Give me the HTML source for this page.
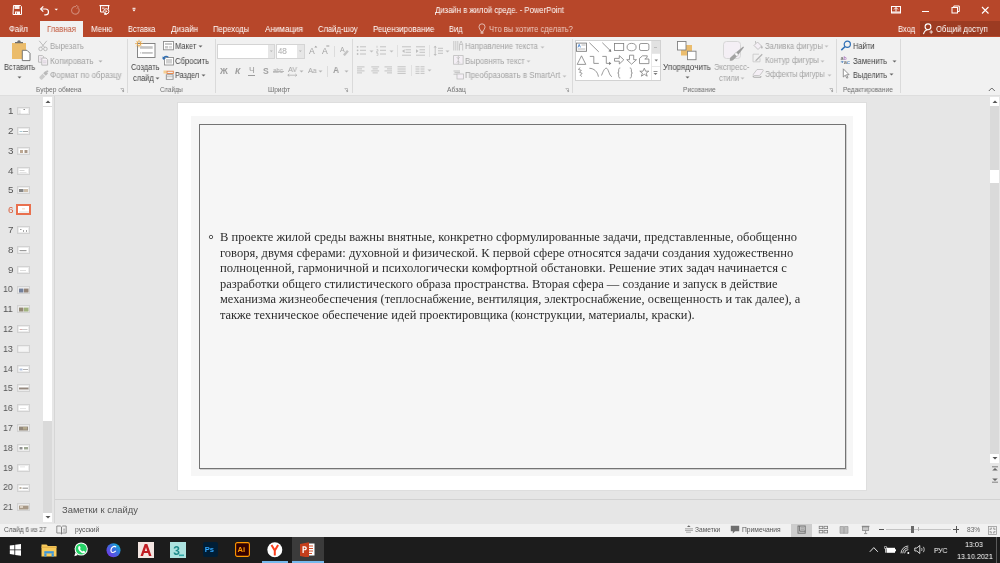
<!DOCTYPE html>
<html><head><meta charset="utf-8">
<style>
*{margin:0;padding:0;box-sizing:border-box}
html,body{width:1000px;height:563px;overflow:hidden;background:#e6e6e6;font-family:"Liberation Sans",sans-serif;position:relative}
.t{position:absolute;white-space:nowrap;will-change:transform}
.r{position:absolute}
</style></head><body>
<div class="r" style="left:0px;top:0px;width:1000px;height:37px;background:#b7472a;"></div>
<div class="t" style="left:434.70px;top:4.47px;font-family:'Liberation Sans',sans-serif;font-size:8.400px;line-height:1.6;color:#fff;transform:scaleX(0.9231);transform-origin:0 0;">Дизайн в жилой среде. - PowerPoint</div>
<svg class="r" style="left:12px;top:5px;" width="11" height="10" viewBox="0 0 11 10"><path d="M1.5 0.5h7l1 1v8h-8.5z" fill="none" stroke="#fff" stroke-width="1"/><rect x="2.5" y="1" width="5" height="3" fill="#fff" opacity="0.9"/><rect x="3" y="6.5" width="5" height="3" fill="#fff"/><rect x="4" y="7.5" width="1" height="1.2" fill="#b7472a"/></svg>
<svg class="r" style="left:39px;top:5px;" width="12" height="11" viewBox="0 0 12 11"><path d="M2 4h4.6a2.9 2.9 0 0 1 0 5.8h-1.3" fill="none" stroke="#fff" stroke-width="1.2"/><path d="M4.3 1.4l-2.7 2.6 2.7 2.6" fill="none" stroke="#fff" stroke-width="1.2"/></svg>
<svg class="r" style="left:54px;top:8px;" width="5" height="3" viewBox="0 0 5 3"><path d="M0.5 0.8h3.5l-1.75 1.8z" fill="#fff"/></svg>
<svg class="r" style="left:70px;top:5px;" width="11" height="10" viewBox="0 0 11 10"><path d="M8.5 3.2a3.8 3.8 0 1 1-2.5-1.6" fill="none" stroke="#fff" stroke-opacity="0.35" stroke-width="1.1"/><path d="M6 0.2l2.5 1.6-1.8 2" fill="none" stroke="#fff" stroke-opacity="0.35" stroke-width="1"/></svg>
<svg class="r" style="left:99px;top:4px;" width="12" height="12" viewBox="0 0 12 12"><rect x="0.5" y="1" width="10" height="1.2" fill="#fff"/><path d="M1.5 2v6h3M9.5 2v3" fill="none" stroke="#fff" stroke-width="1"/><circle cx="7.3" cy="7.3" r="2.6" fill="none" stroke="#fff" stroke-width="1"/><path d="M6.5 6v2.6l2-1.3z" fill="#fff"/><path d="M5 10.2h3M6.5 8.5v2" stroke="#fff" stroke-width="1"/><rect x="3" y="3.5" width="2.5" height="1.3" fill="#fff" opacity="0.7"/></svg>
<svg class="r" style="left:132px;top:7px;" width="5" height="5" viewBox="0 0 5 5"><rect x="0.5" y="0.8" width="3" height="1" fill="#fff"/><path d="M0.3 2.6h3.4l-1.7 1.9z" fill="#fff"/></svg>
<svg class="r" style="left:890px;top:6px;" width="11" height="8" viewBox="0 0 11 8"><rect x="1.5" y="0.5" width="9" height="6.5" fill="none" stroke="#fff" stroke-width="1"/><path d="M6 1.5v4M4 3.5l2-2 2 2" fill="none" stroke="#fff" stroke-width="1"/><rect x="1.5" y="5.5" width="9" height="1.2" fill="#fff"/></svg>
<div class="r" style="left:922px;top:11px;width:7px;height:1px;background:#fff;"></div>
<svg class="r" style="left:951px;top:5px;" width="9" height="9" viewBox="0 0 9 9"><rect x="1" y="2.5" width="5.5" height="5.5" fill="none" stroke="#fff" stroke-width="1"/><path d="M2.8 2.5v-1.5h5.5v5.5h-1.8" fill="none" stroke="#fff" stroke-width="1"/></svg>
<svg class="r" style="left:981px;top:6px;" width="8" height="8" viewBox="0 0 8 8"><path d="M1 1l6.5 6.5M7.5 1l-6.5 6.5" stroke="#fff" stroke-width="1.1"/></svg>
<div class="r" style="left:40px;top:21px;width:43px;height:16px;background:#f1f1f1;"></div>
<div class="t" style="left:9.30px;top:22.55px;font-family:'Liberation Sans',sans-serif;font-size:8.500px;line-height:1.6;color:#fff;transform:scaleX(0.8952);transform-origin:0 0;">Файл</div>
<div class="t" style="left:46.80px;top:22.55px;font-family:'Liberation Sans',sans-serif;font-size:8.500px;line-height:1.6;color:#c25437;transform:scaleX(0.8930);transform-origin:0 0;">Главная</div>
<div class="t" style="left:91.00px;top:22.55px;font-family:'Liberation Sans',sans-serif;font-size:8.500px;line-height:1.6;color:#fff;transform:scaleX(0.9316);transform-origin:0 0;">Меню</div>
<div class="t" style="left:128.10px;top:22.55px;font-family:'Liberation Sans',sans-serif;font-size:8.500px;line-height:1.6;color:#fff;transform:scaleX(0.8640);transform-origin:0 0;">Вставка</div>
<div class="t" style="left:170.70px;top:22.55px;font-family:'Liberation Sans',sans-serif;font-size:8.500px;line-height:1.6;color:#fff;transform:scaleX(0.9447);transform-origin:0 0;">Дизайн</div>
<div class="t" style="left:213.20px;top:22.55px;font-family:'Liberation Sans',sans-serif;font-size:8.500px;line-height:1.6;color:#fff;transform:scaleX(0.9106);transform-origin:0 0;">Переходы</div>
<div class="t" style="left:265.00px;top:22.55px;font-family:'Liberation Sans',sans-serif;font-size:8.500px;line-height:1.6;color:#fff;transform:scaleX(0.9522);transform-origin:0 0;">Анимация</div>
<div class="t" style="left:318.00px;top:22.55px;font-family:'Liberation Sans',sans-serif;font-size:8.500px;line-height:1.6;color:#fff;transform:scaleX(0.8985);transform-origin:0 0;">Слайд-шоу</div>
<div class="t" style="left:372.80px;top:22.55px;font-family:'Liberation Sans',sans-serif;font-size:8.500px;line-height:1.6;color:#fff;transform:scaleX(0.9323);transform-origin:0 0;">Рецензирование</div>
<div class="t" style="left:449.30px;top:22.55px;font-family:'Liberation Sans',sans-serif;font-size:8.500px;line-height:1.6;color:#fff;transform:scaleX(0.8775);transform-origin:0 0;">Вид</div>
<div class="t" style="left:489.00px;top:22.55px;font-family:'Liberation Sans',sans-serif;font-size:8.500px;line-height:1.6;color:#eccbc1;transform:scaleX(0.8918);transform-origin:0 0;">Что вы хотите сделать?</div>
<div class="t" style="left:897.50px;top:22.55px;font-family:'Liberation Sans',sans-serif;font-size:8.500px;line-height:1.6;color:#fff;transform:scaleX(0.8892);transform-origin:0 0;">Вход</div>
<div class="r" style="left:920px;top:21px;width:80px;height:15px;background:#9c3b22;"></div>
<svg class="r" style="left:922px;top:22px;" width="12" height="13" viewBox="0 0 12 13"><circle cx="6" cy="4.8" r="2.9" fill="none" stroke="#fff" stroke-width="1.1"/><path d="M1.5 12.2c0.6-2.6 2.2-4.2 4-4.5" fill="none" stroke="#fff" stroke-width="1.1"/><path d="M7.5 10h3.5M9.2 8.2v3.6" stroke="#fff" stroke-opacity="0.75" stroke-width="1"/></svg>
<svg class="r" style="left:478px;top:23px;" width="8" height="12" viewBox="0 0 8 12"><path d="M4 0.8a3 3 0 0 1 3 3c0 1.6-1.3 2.8-1.8 4.5h-2.4c-0.5-1.7-1.8-2.9-1.8-4.5a3 3 0 0 1 3-3z" fill="none" stroke="#fff" stroke-opacity="0.6" stroke-width="1"/><rect x="2.6" y="8.8" width="2.8" height="2" fill="#fff" fill-opacity="0.6"/></svg>
<div class="t" style="left:935.60px;top:22.55px;font-family:'Liberation Sans',sans-serif;font-size:8.500px;line-height:1.6;color:#fff;transform:scaleX(0.9034);transform-origin:0 0;">Общий доступ</div>
<div class="r" style="left:0px;top:37px;width:1000px;height:58px;background:#f1f1f1;"></div>
<div class="r" style="left:0px;top:95px;width:1000px;height:1px;background:#dedede;"></div>
<div class="t" style="left:3.60px;top:61.48px;font-family:'Liberation Sans',sans-serif;font-size:8.300px;line-height:1.6;color:#444;transform:scaleX(0.8894);transform-origin:0 0;">Вставить</div>
<div class="t" style="left:50.00px;top:39.98px;font-family:'Liberation Sans',sans-serif;font-size:8.300px;line-height:1.6;color:#a3a3a3;transform:scaleX(0.9183);transform-origin:0 0;">Вырезать</div>
<div class="t" style="left:50.00px;top:54.68px;font-family:'Liberation Sans',sans-serif;font-size:8.300px;line-height:1.6;color:#a3a3a3;transform:scaleX(0.9755);transform-origin:0 0;">Копировать</div>
<div class="t" style="left:50.00px;top:68.98px;font-family:'Liberation Sans',sans-serif;font-size:8.300px;line-height:1.6;color:#a3a3a3;transform:scaleX(0.9620);transform-origin:0 0;">Формат по образцу</div>
<div class="t" style="left:35.80px;top:84.52px;font-family:'Liberation Sans',sans-serif;font-size:6.700px;line-height:1.6;color:#707070;">Буфер обмена</div>
<div class="t" style="left:131.20px;top:61.48px;font-family:'Liberation Sans',sans-serif;font-size:8.300px;line-height:1.6;color:#444;transform:scaleX(0.9004);transform-origin:0 0;">Создать</div>
<div class="t" style="left:133.00px;top:71.78px;font-family:'Liberation Sans',sans-serif;font-size:8.300px;line-height:1.6;color:#444;transform:scaleX(0.9006);transform-origin:0 0;">слайд</div>
<div class="t" style="left:175.00px;top:39.98px;font-family:'Liberation Sans',sans-serif;font-size:8.300px;line-height:1.6;color:#444;transform:scaleX(0.9111);transform-origin:0 0;">Макет</div>
<div class="t" style="left:175.00px;top:54.68px;font-family:'Liberation Sans',sans-serif;font-size:8.300px;line-height:1.6;color:#444;transform:scaleX(0.9270);transform-origin:0 0;">Сбросить</div>
<div class="t" style="left:175.00px;top:68.98px;font-family:'Liberation Sans',sans-serif;font-size:8.300px;line-height:1.6;color:#444;transform:scaleX(0.8786);transform-origin:0 0;">Раздел</div>
<div class="t" style="left:160.20px;top:84.52px;font-family:'Liberation Sans',sans-serif;font-size:6.700px;line-height:1.6;color:#707070;transform:scaleX(0.9182);transform-origin:0 0;">Слайды</div>
<div class="t" style="left:267.90px;top:84.52px;font-family:'Liberation Sans',sans-serif;font-size:6.700px;line-height:1.6;color:#707070;">Шрифт</div>
<div class="t" style="left:465.30px;top:39.98px;font-family:'Liberation Sans',sans-serif;font-size:8.300px;line-height:1.6;color:#a3a3a3;transform:scaleX(0.9265);transform-origin:0 0;">Направление текста</div>
<div class="t" style="left:465.30px;top:54.68px;font-family:'Liberation Sans',sans-serif;font-size:8.300px;line-height:1.6;color:#a3a3a3;transform:scaleX(0.9264);transform-origin:0 0;">Выровнять текст</div>
<div class="t" style="left:465.30px;top:68.98px;font-family:'Liberation Sans',sans-serif;font-size:8.300px;line-height:1.6;color:#a3a3a3;transform:scaleX(0.9456);transform-origin:0 0;">Преобразовать в SmartArt</div>
<div class="t" style="left:447.00px;top:84.52px;font-family:'Liberation Sans',sans-serif;font-size:6.700px;line-height:1.6;color:#707070;">Абзац</div>
<div class="t" style="left:663.00px;top:61.48px;font-family:'Liberation Sans',sans-serif;font-size:8.300px;line-height:1.6;color:#444;transform:scaleX(0.9679);transform-origin:0 0;">Упорядочить</div>
<div class="t" style="left:713.70px;top:61.48px;font-family:'Liberation Sans',sans-serif;font-size:8.300px;line-height:1.6;color:#a3a3a3;transform:scaleX(0.9188);transform-origin:0 0;">Экспресс-</div>
<div class="t" style="left:718.80px;top:71.78px;font-family:'Liberation Sans',sans-serif;font-size:8.300px;line-height:1.6;color:#a3a3a3;transform:scaleX(0.9067);transform-origin:0 0;">стили</div>
<div class="t" style="left:682.90px;top:84.52px;font-family:'Liberation Sans',sans-serif;font-size:6.700px;line-height:1.6;color:#707070;transform:scaleX(0.9689);transform-origin:0 0;">Рисование</div>
<div class="t" style="left:764.90px;top:39.78px;font-family:'Liberation Sans',sans-serif;font-size:8.300px;line-height:1.6;color:#a3a3a3;transform:scaleX(0.9134);transform-origin:0 0;">Заливка фигуры</div>
<div class="t" style="left:764.90px;top:54.08px;font-family:'Liberation Sans',sans-serif;font-size:8.300px;line-height:1.6;color:#a3a3a3;transform:scaleX(0.9287);transform-origin:0 0;">Контур фигуры</div>
<div class="t" style="left:764.90px;top:68.08px;font-family:'Liberation Sans',sans-serif;font-size:8.300px;line-height:1.6;color:#a3a3a3;transform:scaleX(0.8603);transform-origin:0 0;">Эффекты фигуры</div>
<div class="t" style="left:853.00px;top:39.98px;font-family:'Liberation Sans',sans-serif;font-size:8.300px;line-height:1.6;color:#444;transform:scaleX(0.9123);transform-origin:0 0;">Найти</div>
<div class="t" style="left:853.00px;top:54.68px;font-family:'Liberation Sans',sans-serif;font-size:8.300px;line-height:1.6;color:#444;transform:scaleX(0.9113);transform-origin:0 0;">Заменить</div>
<div class="t" style="left:853.00px;top:68.98px;font-family:'Liberation Sans',sans-serif;font-size:8.300px;line-height:1.6;color:#444;transform:scaleX(0.8881);transform-origin:0 0;">Выделить</div>
<div class="t" style="left:843.30px;top:84.52px;font-family:'Liberation Sans',sans-serif;font-size:6.700px;line-height:1.6;color:#707070;transform:scaleX(0.9797);transform-origin:0 0;">Редактирование</div>
<div class="r" style="left:127px;top:39px;width:1px;height:54px;background:#dadada;"></div>
<div class="r" style="left:215px;top:39px;width:1px;height:54px;background:#dadada;"></div>
<div class="r" style="left:352px;top:39px;width:1px;height:54px;background:#dadada;"></div>
<div class="r" style="left:572px;top:39px;width:1px;height:54px;background:#dadada;"></div>
<div class="r" style="left:836px;top:39px;width:1px;height:54px;background:#dadada;"></div>
<div class="r" style="left:900px;top:39px;width:1px;height:54px;background:#dadada;"></div>
<svg class="r" style="left:11px;top:40px;" width="21" height="22" viewBox="0 0 21 22"><rect x="1" y="3" width="14" height="16" fill="#ebbc6b"/><path d="M4 3.2h8v-1.2h-2.2a1.8 1.8 0 0 0-3.6 0h-2.2z" fill="#6e6e6e"/><path d="M11.3 10.3h4.7l3 3v7.3h-7.7z" fill="#fff" stroke="#6a6a6a" stroke-width="0.9"/></svg>
<svg class="r" style="left:17px;top:76px;" width="5" height="3" viewBox="0 0 5 3"><path d="M0.5 0.5h4l-2 2z" fill="#666"/></svg>
<svg class="r" style="left:38px;top:40px;" width="10" height="12" viewBox="0 0 10 12"><path d="M1.2 0.8l5.6 6.8M8.8 0.8l-5.6 6.8" stroke="#b5b5b5" stroke-width="0.9" fill="none"/><circle cx="2.6" cy="8.9" r="1.8" fill="none" stroke="#b5b5b5" stroke-width="0.9"/><circle cx="7.4" cy="8.9" r="1.8" fill="none" stroke="#b5b5b5" stroke-width="0.9"/></svg>
<svg class="r" style="left:38px;top:55px;" width="11" height="11" viewBox="0 0 11 11"><path d="M0.5 0.6h4l1.2 1.2v5.4h-5.2z" fill="#f6f2f6" stroke="#b5b5b5" stroke-width="0.9"/><path d="M3.8 3h4.2l1.6 1.6v5.5h-5.8z" fill="#f6f2f6" stroke="#b5b5b5" stroke-width="0.9"/><path d="M1.5 3h2M1.5 4.8h2M5 6h3.5M5 7.8h3.5" stroke="#cdbfd0" stroke-width="0.7"/></svg>
<svg class="r" style="left:98px;top:60px;" width="5" height="3" viewBox="0 0 5 3"><path d="M0.5 0.5h4l-2 2z" fill="#b0b0b0"/></svg>
<svg class="r" style="left:39px;top:70px;" width="10" height="10" viewBox="0 0 10 10"><path d="M0.6 6.8l3-3 2.6 2.6-3 3c-0.5 0.4-1 0.4-1.4 0l-1.2-1.2c-0.4-0.4-0.4-0.9 0-1.4z" fill="#cbcbcb"/><path d="M4.2 3.2l2.2-2.2 2.6 2.6-2.2 2.2z" fill="#b9b9b9"/><path d="M8.2 0.3v2.2M7.1 1.4h2.2" stroke="#b0b0b0" stroke-width="0.8"/></svg>
<svg class="r" style="left:120px;top:88px;" width="5" height="5" viewBox="0 0 5 5"><path d="M0.5 0.5h3v3" fill="none" stroke="#9a9a9a" stroke-width="0.6"/><path d="M1.5 1.5l2 2M2.3 3.6h1.3v-1.3" fill="none" stroke="#8a8a8a" stroke-width="0.6"/></svg>
<svg class="r" style="left:344px;top:88px;" width="5" height="5" viewBox="0 0 5 5"><path d="M0.5 0.5h3v3" fill="none" stroke="#9a9a9a" stroke-width="0.6"/><path d="M1.5 1.5l2 2M2.3 3.6h1.3v-1.3" fill="none" stroke="#8a8a8a" stroke-width="0.6"/></svg>
<svg class="r" style="left:565px;top:88px;" width="5" height="5" viewBox="0 0 5 5"><path d="M0.5 0.5h3v3" fill="none" stroke="#9a9a9a" stroke-width="0.6"/><path d="M1.5 1.5l2 2M2.3 3.6h1.3v-1.3" fill="none" stroke="#8a8a8a" stroke-width="0.6"/></svg>
<svg class="r" style="left:829px;top:88px;" width="5" height="5" viewBox="0 0 5 5"><path d="M0.5 0.5h3v3" fill="none" stroke="#9a9a9a" stroke-width="0.6"/><path d="M1.5 1.5l2 2M2.3 3.6h1.3v-1.3" fill="none" stroke="#8a8a8a" stroke-width="0.6"/></svg>
<svg class="r" style="left:134px;top:39px;" width="23" height="20" viewBox="0 0 23 20"><rect x="3.5" y="4.5" width="17.5" height="14" fill="#fff" stroke="#7a7a7a" stroke-width="0.9"/><rect x="6" y="7.2" width="12.7" height="2.6" fill="#c4c4c4"/><rect x="7.8" y="13" width="10.9" height="1.8" fill="#c4c4c4"/><rect x="6" y="13.3" width="1" height="1.2" fill="#c4c4c4"/><circle cx="5" cy="4.6" r="1.9" fill="none" stroke="#eaa94a" stroke-width="1.1"/><path d="M5 0.8v1.4M5 7v1.4M1.2 4.6h1.4M7.4 4.6h1.4M2.3 1.9l1 1M6.7 6.3l1 1M2.3 7.3l1-1M6.7 2.9l1-1" stroke="#eaa94a" stroke-width="0.9"/></svg>
<svg class="r" style="left:155px;top:77px;" width="5" height="3" viewBox="0 0 5 3"><path d="M0.5 0.5h4l-2 2z" fill="#666"/></svg>
<svg class="r" style="left:163px;top:41px;" width="11" height="10" viewBox="0 0 11 10"><rect x="0.5" y="0.5" width="10" height="8.3" fill="#fff" stroke="#8c8c8c" stroke-width="0.9"/><rect x="2" y="2" width="7" height="2" fill="#c8c8c8"/><rect x="2" y="5" width="3" height="2.5" fill="#c8c8c8"/><rect x="5.8" y="5" width="3.2" height="2.5" fill="#d8d8d8"/></svg>
<svg class="r" style="left:198px;top:45px;" width="5" height="3" viewBox="0 0 5 3"><path d="M0.5 0.5h4l-2 2z" fill="#666"/></svg>
<svg class="r" style="left:162px;top:55px;" width="12" height="11" viewBox="0 0 12 11"><rect x="2.5" y="2.5" width="9" height="7.5" fill="#fff" stroke="#8c8c8c" stroke-width="0.9"/><rect x="4" y="4" width="6" height="4.5" fill="#d0d0d0"/><path d="M1 4.2c0.5-2.6 3.2-3.6 5.4-2" fill="none" stroke="#2f6fb5" stroke-width="1.1"/><path d="M0.3 1.6l0.8 3.2 2.8-1.4z" fill="#2f6fb5"/></svg>
<svg class="r" style="left:163px;top:70px;" width="11" height="10" viewBox="0 0 11 10"><rect x="0.5" y="0.5" width="3" height="3" fill="#f5cf91"/><rect x="4" y="1.2" width="6.3" height="2.3" fill="none" stroke="#e47f40" stroke-width="0.9"/><rect x="3.3" y="4.8" width="6.8" height="4.5" fill="#fff" stroke="#8c8c8c" stroke-width="0.9"/><path d="M3.3 6.8h6.8" stroke="#9c9c9c" stroke-width="0.7"/></svg>
<svg class="r" style="left:201px;top:74px;" width="5" height="3" viewBox="0 0 5 3"><path d="M0.5 0.5h4l-2 2z" fill="#666"/></svg>
<div class="r" style="left:217px;top:44px;width:58px;height:15px;background:#fff;border:1px solid #d4d4d4"></div>
<div class="r" style="left:268px;top:45px;width:6px;height:13px;background:#e6e6e6;"></div>
<svg class="r" style="left:269px;top:50px;" width="5" height="3" viewBox="0 0 5 3"><path d="M0.8 0.5h3l-1.5 1.5z" fill="#b5b5b5"/></svg>
<div class="r" style="left:276px;top:44px;width:29px;height:15px;background:#fff;border:1px solid #d4d4d4"></div>
<div class="r" style="left:297px;top:45px;width:7px;height:13px;background:#e6e6e6;"></div>
<svg class="r" style="left:298px;top:50px;" width="5" height="3" viewBox="0 0 5 3"><path d="M0.8 0.5h3l-1.5 1.5z" fill="#b5b5b5"/></svg>
<div class="t" style="left:277.60px;top:44.21px;font-family:'Liberation Sans',sans-serif;font-size:8.800px;line-height:1.6;color:#a5a5a5;transform:scaleX(0.8580);transform-origin:0 0;">48</div>
<div class="t" style="left:309.00px;top:44.54px;font-family:'Liberation Sans',sans-serif;font-size:8.600px;line-height:1.6;color:#a0a0a0;">A</div>
<svg class="r" style="left:314px;top:45px;" width="4" height="3" viewBox="0 0 4 3"><path d="M0.3 2.5l1.5-1.8 1.5 1.8z" fill="#a0a0a0"/></svg>
<div class="t" style="left:321.80px;top:44.54px;font-family:'Liberation Sans',sans-serif;font-size:8.600px;line-height:1.6;color:#a0a0a0;">A</div>
<svg class="r" style="left:326px;top:45px;" width="4" height="3" viewBox="0 0 4 3"><rect x="0.3" y="0.5" width="3" height="1" fill="#a0a0a0"/></svg>
<div class="r" style="left:334px;top:46px;width:1px;height:11px;background:#dcdcdc;"></div>
<div class="t" style="left:340.00px;top:44.47px;font-family:'Liberation Sans',sans-serif;font-size:7.000px;line-height:1.6;color:#a8a8a8;">A</div>
<svg class="r" style="left:342px;top:48px;" width="7" height="8" viewBox="0 0 7 8"><path d="M1 6.5l4-4.5 1.8 1.6-4 4.5z" fill="#c3c3c3"/></svg>
<div class="t" style="left:220.34px;top:64.74px;font-family:'Liberation Sans',sans-serif;font-size:8.600px;line-height:1.6;color:#9c9c9c;font-weight:bold;">Ж</div>
<div class="t" style="left:234.70px;top:64.74px;font-family:'Liberation Sans',sans-serif;font-size:8.600px;line-height:1.6;color:#9c9c9c;font-weight:bold;font-style:italic;">К</div>
<div class="t" style="left:248.50px;top:64.44px;font-family:'Liberation Sans',sans-serif;font-size:8.600px;line-height:1.6;color:#9c9c9c;">Ч</div>
<div class="r" style="left:248px;top:75px;width:7px;height:1px;background:#9c9c9c;"></div>
<div class="t" style="left:262.70px;top:64.74px;font-family:'Liberation Sans',sans-serif;font-size:8.600px;line-height:1.6;color:#a0a0a0;font-weight:bold;">S</div>
<div class="t" style="left:273.40px;top:65.80px;font-family:'Liberation Sans',sans-serif;font-size:6.800px;line-height:1.6;color:#a8a8a8;transform:scaleX(0.9120);transform-origin:0 0;">abc</div>
<div class="r" style="left:273px;top:71px;width:11px;height:1px;background:#b8b8b8;"></div>
<div class="t" style="left:287.80px;top:64.09px;font-family:'Liberation Sans',sans-serif;font-size:7.600px;line-height:1.6;color:#a3a3a3;transform:scaleX(0.9398);transform-origin:0 0;">AV</div>
<svg class="r" style="left:287px;top:73px;" width="11" height="4" viewBox="0 0 11 4"><path d="M0.8 2.2h9M0.8 2.2l1.5-1.3M0.8 2.2l1.5 1.3M9.8 2.2l-1.5-1.3M9.8 2.2l-1.5 1.3" fill="none" stroke="#a8a8a8" stroke-width="0.7"/></svg>
<svg class="r" style="left:299px;top:70px;" width="5" height="3" viewBox="0 0 5 3"><path d="M0.5 0.5h4l-2 2z" fill="#b5b5b5"/></svg>
<div class="t" style="left:307.80px;top:65.09px;font-family:'Liberation Sans',sans-serif;font-size:7.600px;line-height:1.6;color:#a3a3a3;transform:scaleX(0.9237);transform-origin:0 0;">Aa</div>
<svg class="r" style="left:318px;top:70px;" width="5" height="3" viewBox="0 0 5 3"><path d="M0.5 0.5h4l-2 2z" fill="#b5b5b5"/></svg>
<div class="r" style="left:327px;top:66px;width:1px;height:11px;background:#dcdcdc;"></div>
<div class="t" style="left:333.20px;top:62.98px;font-family:'Liberation Sans',sans-serif;font-size:9.000px;line-height:1.6;color:#9c9c9c;font-weight:bold;transform:scaleX(0.9227);transform-origin:0 0;">A</div>
<svg class="r" style="left:344px;top:70px;" width="5" height="3" viewBox="0 0 5 3"><path d="M0.5 0.5h4l-2 2z" fill="#b5b5b5"/></svg>
<svg class="r" style="left:356px;top:45px;" width="11" height="11" viewBox="0 0 11 11"><circle cx="1.6" cy="1.8" r="0.9" fill="#bdbdbd"/><circle cx="1.6" cy="5.3" r="0.9" fill="#bdbdbd"/><circle cx="1.6" cy="9" r="0.9" fill="#bdbdbd"/><path d="M4 1.8h6M4 5.3h6M4 9h6" stroke="#bdbdbd" stroke-width="0.9"/></svg>
<svg class="r" style="left:369px;top:50px;" width="5" height="3" viewBox="0 0 5 3"><path d="M0.5 0.5h4l-2 2z" fill="#c0c0c0"/></svg>
<svg class="r" style="left:376px;top:45px;" width="11" height="11" viewBox="0 0 11 11"><path d="M1 0.8v2M0.6 4.6h1.4v1.6h-1.4v1.6h1.4M0.6 8.2h1.4v2.2h-1.4" fill="none" stroke="#bdbdbd" stroke-width="0.7"/><path d="M4 1.8h6M4 5.3h6M4 9h6" stroke="#bdbdbd" stroke-width="0.9"/></svg>
<svg class="r" style="left:389px;top:50px;" width="5" height="3" viewBox="0 0 5 3"><path d="M0.5 0.5h4l-2 2z" fill="#c0c0c0"/></svg>
<div class="r" style="left:397px;top:45px;width:1px;height:12px;background:#e0e0e0;"></div>
<svg class="r" style="left:401px;top:46px;" width="11" height="11" viewBox="0 0 11 11"><path d="M1 0.8h9M4.5 3.8h5.5M4.5 6.3h5.5M1 9.2h9" stroke="#bdbdbd" stroke-width="0.9"/><path d="M3.6 3.2l-2.6 1.9 2.6 1.9z" fill="#bdbdbd"/></svg>
<svg class="r" style="left:415px;top:46px;" width="11" height="11" viewBox="0 0 11 11"><path d="M1 0.8h9M4.5 3.8h5.5M4.5 6.3h5.5M1 9.2h9" stroke="#bdbdbd" stroke-width="0.9"/><path d="M1 3.2l2.6 1.9-2.6 1.9z" fill="#bdbdbd"/></svg>
<div class="r" style="left:429px;top:45px;width:1px;height:12px;background:#e0e0e0;"></div>
<svg class="r" style="left:433px;top:45px;" width="11" height="12" viewBox="0 0 11 12"><path d="M2.2 1v9.5" stroke="#bdbdbd" stroke-width="0.9"/><path d="M0.5 2.6l1.7-1.9 1.7 1.9zM0.5 8.9l1.7 1.9 1.7-1.9z" fill="#bdbdbd"/><path d="M5 3.3h5M5 5.8h5M5 8.3h5" stroke="#bdbdbd" stroke-width="0.9"/></svg>
<svg class="r" style="left:445px;top:50px;" width="5" height="3" viewBox="0 0 5 3"><path d="M0.5 0.5h4l-2 2z" fill="#c0c0c0"/></svg>
<svg class="r" style="left:357px;top:66px;" width="9" height="8" viewBox="0 0 9 8"><path d="M0 0.9h7.5M0 2.9h5M0 4.9h7.5M0 6.9h5" stroke="#bdbdbd" stroke-width="0.9"/></svg>
<svg class="r" style="left:371px;top:66px;" width="9" height="8" viewBox="0 0 9 8"><path d="M0.3 0.9h7.8M1.6 2.9h5.2M0.3 4.9h7.8M1.6 6.9h5.2" stroke="#bdbdbd" stroke-width="0.9"/></svg>
<svg class="r" style="left:384px;top:66px;" width="9" height="8" viewBox="0 0 9 8"><path d="M0.5 0.9h7.5M3 2.9h5M0.5 4.9h7.5M3 6.9h5" stroke="#bdbdbd" stroke-width="0.9"/></svg>
<svg class="r" style="left:397px;top:66px;" width="10" height="9" viewBox="0 0 10 9"><path d="M0.5 0.8h8.2M0.5 3h8.2M0.5 5.2h8.2M0.5 7.4h8.2" stroke="#bdbdbd" stroke-width="0.9"/></svg>
<div class="r" style="left:411px;top:65px;width:1px;height:11px;background:#e0e0e0;"></div>
<svg class="r" style="left:415px;top:66px;" width="10" height="9" viewBox="0 0 10 9"><path d="M0.5 0.8h9M0.5 3h9M0.5 5.2h9M0.5 7.4h9" stroke="#bdbdbd" stroke-width="0.9" stroke-dasharray="4 1"/></svg>
<svg class="r" style="left:427px;top:69px;" width="5" height="3" viewBox="0 0 5 3"><path d="M0.5 0.5h4l-2 2z" fill="#c0c0c0"/></svg>
<svg class="r" style="left:453px;top:40px;" width="11" height="11" viewBox="0 0 11 11"><path d="M0.8 1v9.5M2.8 1v9.5M4.8 1v9.5" stroke="#bdbdbd" stroke-width="0.8"/><path d="M6.5 10.5v-6l1.6-3.5 1.6 3.5v6M6.5 4.5h3.2" fill="none" stroke="#bdbdbd" stroke-width="0.8"/></svg>
<svg class="r" style="left:540px;top:46px;" width="5" height="3" viewBox="0 0 5 3"><path d="M0.5 0.5h4l-2 2z" fill="#c0c0c0"/></svg>
<svg class="r" style="left:453px;top:55px;" width="11" height="10" viewBox="0 0 11 10"><rect x="0.6" y="0.6" width="9.5" height="8.6" fill="#f4eff5" stroke="#bdbdbd" stroke-width="0.8"/><path d="M5.3 0.6v8.6M3.8 2.2l1.5 1.6 1.5-1.6M3.8 7.6l1.5-1.6 1.5 1.6" fill="none" stroke="#bdbdbd" stroke-width="0.8"/></svg>
<svg class="r" style="left:526px;top:60px;" width="5" height="3" viewBox="0 0 5 3"><path d="M0.5 0.5h4l-2 2z" fill="#c0c0c0"/></svg>
<svg class="r" style="left:453px;top:70px;" width="11" height="10" viewBox="0 0 11 10"><path d="M0.5 1h6.5M1.5 2.6h5.5M0.5 4.2h4" stroke="#bdbdbd" stroke-width="0.9"/><rect x="4" y="4" width="6.5" height="5" fill="#f4eff5" stroke="#bdbdbd" stroke-width="0.8"/></svg>
<svg class="r" style="left:562px;top:75px;" width="5" height="3" viewBox="0 0 5 3"><path d="M0.5 0.5h4l-2 2z" fill="#c0c0c0"/></svg>
<div class="r" style="left:575px;top:40px;width:86px;height:41px;background:#fff;border:1px solid #d2d2d2"></div>
<div class="r" style="left:651px;top:41px;width:9px;height:13px;background:#e2e2e2;"></div>
<div class="r" style="left:651px;top:41px;width:1px;height:39px;background:#e8e8e8;"></div>
<div class="r" style="left:652px;top:53px;width:8px;height:1px;background:#e8e8e8;"></div>
<div class="r" style="left:652px;top:66px;width:8px;height:1px;background:#e8e8e8;"></div>
<div class="r" style="left:654px;top:47px;width:3px;height:1px;background:#bdbdbd;"></div>
<svg class="r" style="left:654px;top:59px;" width="5" height="3" viewBox="0 0 5 3"><path d="M0.5 0.5h3.5l-1.75 2z" fill="#777"/></svg>
<svg class="r" style="left:653px;top:71px;" width="6" height="5" viewBox="0 0 6 5"><path d="M0.5 0.5h4" stroke="#777" stroke-width="0.8"/><path d="M0.5 2h4l-2 2z" fill="#777"/></svg>
<svg class="r" style="left:575px;top:40px;" width="76" height="41" viewBox="0 0 76 41">
<rect x="1.5" y="3.1" width="10" height="8.2" fill="#fff" stroke="#7d7d7d" stroke-width="0.9"/>
<path d="M3 7.4l1.2-3 1.2 3" fill="none" stroke="#3d7fd0" stroke-width="0.9"/><path d="M6.5 5h4M2.8 9h7.5" stroke="#b0b0b0" stroke-width="0.9"/>
<path d="M14.4 2.7l9.4 9.2" stroke="#7d7d7d" stroke-width="0.8"/>
<path d="M27.3 2.7l8.6 8.5" stroke="#7d7d7d" stroke-width="0.8"/><path d="M36.3 11.9l-3-0.6 2.4-2.4z" fill="#7d7d7d"/>
<rect x="39.5" y="3.5" width="9.2" height="7" fill="none" stroke="#7d7d7d" stroke-width="0.8"/>
<ellipse cx="56.6" cy="7.1" rx="4.5" ry="3.7" fill="none" stroke="#7d7d7d" stroke-width="0.8"/>
<rect x="64.5" y="3.5" width="9.4" height="7" rx="1.6" fill="none" stroke="#7d7d7d" stroke-width="0.8"/>
<path d="M6.5 15.8l4.3 8.6h-8.6z" fill="none" stroke="#7d7d7d" stroke-width="0.8"/>
<path d="M14.8 16.4h4v7h5" fill="none" stroke="#7d7d7d" stroke-width="0.8"/>
<path d="M27.3 16.4h4v7h4.5" fill="none" stroke="#7d7d7d" stroke-width="0.8"/><path d="M36.4 23.4l-2.4-1.6v3.2z" fill="#7d7d7d"/>
<path d="M39.5 18.4h4.8v-2.8l4.5 4.2-4.5 4.2v-2.8h-4.8z" fill="none" stroke="#7d7d7d" stroke-width="0.8"/>
<path d="M54.5 15.2h4.2v4.5h2.8l-4.9 4.5-4.9-4.5h2.8z" fill="none" stroke="#7d7d7d" stroke-width="0.8"/>
<path d="M64.5 23.6v-5.2l3-2.6h4.8c0 1.8-1.2 2.8-2.5 3.2h4.1v4.6z" fill="none" stroke="#7d7d7d" stroke-width="0.8"/>
<path d="M5 27.5l-1.5 2 2.8 0.8-1.8 2 2.6 1-1.8 2 1.5 1.2" fill="none" stroke="#7d7d7d" stroke-width="0.8"/>
<path d="M14.4 28.3c4.5 0 8.3 3.4 9 8.4" fill="none" stroke="#7d7d7d" stroke-width="0.8"/>
<path d="M26.5 35.5c1.5-4 3-7.3 4.8-7.3c2.2 0 3 8.3 5.6 8.3" fill="none" stroke="#7d7d7d" stroke-width="0.8"/>
<path d="M45.3 28c-1.2 0-1.6 0.6-1.6 1.6v2.4c0 0.6-0.5 0.9-1 1 0.5 0.1 1 0.4 1 1v2.4c0 1 0.4 1.6 1.6 1.6" fill="none" stroke="#7d7d7d" stroke-width="0.8"/>
<path d="M54.8 28c1.2 0 1.6 0.6 1.6 1.6v2.4c0 0.6 0.5 0.9 1 1-0.5 0.1-1 0.4-1 1v2.4c0 1-0.4 1.6-1.6 1.6" fill="none" stroke="#7d7d7d" stroke-width="0.8"/>
<path d="M69.3 28.2l1.3 3h3.2l-2.6 1.9 1 3.1-2.9-1.9-2.9 1.9 1-3.1-2.6-1.9h3.2z" fill="none" stroke="#7d7d7d" stroke-width="0.8"/>
</svg>
<svg class="r" style="left:676px;top:40px;" width="21" height="21" viewBox="0 0 21 21"><rect x="5" y="5" width="11" height="10.5" fill="#ebbd6e"/><rect x="1.5" y="1.5" width="8.5" height="8.5" fill="#fff" stroke="#808080" stroke-width="0.9"/><rect x="11.5" y="11.2" width="8.5" height="8.5" fill="#fff" stroke="#808080" stroke-width="0.9"/></svg>
<svg class="r" style="left:685px;top:76px;" width="5" height="3" viewBox="0 0 5 3"><path d="M0.5 0.5h4l-2 2z" fill="#666"/></svg>
<svg class="r" style="left:722px;top:40px;" width="23" height="22" viewBox="0 0 23 22"><rect x="1.5" y="1.5" width="17" height="17" rx="3" fill="#f4eff5" stroke="#d4d4d4" stroke-width="0.9"/><path d="M21.2 6.5l0.8 0.8-5.5 7.2-2.3-2.3z" fill="#9e9e9e"/><path d="M14 12.4l2.5 2.5-1.6 1.6-2.5-2.5z" fill="#fff" stroke="#a8a8a8" stroke-width="0.6"/><path d="M12.3 14.1l2.5 2.5-3.8 3.6c-0.8 0.6-2.2 0.6-3.2 0.6 0-1 0-2.4 0.6-3.2z" fill="#a3a3a3"/></svg>
<svg class="r" style="left:740px;top:77px;" width="5" height="3" viewBox="0 0 5 3"><path d="M0.5 0.5h4l-2 2z" fill="#c0c0c0"/></svg>
<svg class="r" style="left:753px;top:40px;" width="11" height="10" viewBox="0 0 11 10"><path d="M2.5 1v2.5M1 5.5l3.5-3.5 4 4-3.5 3.5z" fill="#f4eff5" stroke="#b8b8b8" stroke-width="0.8"/><path d="M8.7 5.5c0.6 0.8 1.1 1.5 1.1 2.1a1 1 0 0 1-2 0c0-0.6 0.5-1.3 0.9-2.1z" fill="#b8b8b8"/></svg>
<svg class="r" style="left:824px;top:45px;" width="5" height="3" viewBox="0 0 5 3"><path d="M0.5 0.5h4l-2 2z" fill="#c0c0c0"/></svg>
<svg class="r" style="left:752px;top:53px;" width="11" height="10" viewBox="0 0 11 10"><path d="M7 1.2h-6v7.6h7v-3.5" fill="none" stroke="#c6c6c6" stroke-width="0.8"/><path d="M3.8 6.8l6-6 0.9 0.9-6 6-1.5 0.6z" fill="#b4b4b4"/></svg>
<svg class="r" style="left:820px;top:60px;" width="5" height="3" viewBox="0 0 5 3"><path d="M0.5 0.5h4l-2 2z" fill="#c0c0c0"/></svg>
<svg class="r" style="left:752px;top:68px;" width="12" height="10" viewBox="0 0 12 10"><path d="M1.5 6l3.5-4.5h5.5c0.8 0 1 0.6 0.7 1.2l-2.8 4c-0.5 0.6-1 0.8-1.6 0.8h-4.6c-0.8 0-1.2-0.8-0.7-1.5z" fill="#f4eff5" stroke="#bdbdbd" stroke-width="0.8"/><path d="M1 7.8c0 1 0.6 1.5 1.5 1.5h5c0.8 0 1.4-0.5 1.8-1" fill="none" stroke="#aaaaaa" stroke-width="1.1"/></svg>
<svg class="r" style="left:827px;top:74px;" width="5" height="3" viewBox="0 0 5 3"><path d="M0.5 0.5h4l-2 2z" fill="#c0c0c0"/></svg>
<svg class="r" style="left:840px;top:40px;" width="12" height="11" viewBox="0 0 12 11"><circle cx="7.3" cy="4.3" r="3.1" fill="none" stroke="#2f6fb5" stroke-width="1.2"/><path d="M5.1 6.5l-3.8 3.6" stroke="#2f6fb5" stroke-width="1.5"/></svg>
<svg class="r" style="left:840px;top:55px;" width="12" height="10" viewBox="0 0 12 10"><text x="0.6" y="4.6" font-family="Liberation Sans" font-size="5.6" fill="#555">a</text><text x="3.6" y="4.6" font-family="Liberation Sans" font-size="5.6" fill="#9b59b6">b</text><path d="M0.8 6.8h2.2M2.2 5.8l1 1-1 1" fill="none" stroke="#2f6fb5" stroke-width="0.7"/><text x="3.8" y="9.2" font-family="Liberation Sans" font-size="5.6" fill="#555">a</text><text x="6.9" y="9.2" font-family="Liberation Sans" font-size="5.6" fill="#2f6fb5">c</text></svg>
<svg class="r" style="left:892px;top:60px;" width="5" height="3" viewBox="0 0 5 3"><path d="M0.5 0.5h4l-2 2z" fill="#666"/></svg>
<svg class="r" style="left:842px;top:68px;" width="8" height="11" viewBox="0 0 8 11"><path d="M1.3 0.8v8.2l2-1.8 1.5 3 1.2-0.6-1.5-2.9h2.6z" fill="#fff" stroke="#7a7a7a" stroke-width="0.8"/></svg>
<svg class="r" style="left:889px;top:73px;" width="5" height="3" viewBox="0 0 5 3"><path d="M0.5 0.5h4l-2 2z" fill="#666"/></svg>
<svg class="r" style="left:988px;top:87px;" width="8" height="5" viewBox="0 0 8 5"><path d="M0.8 4l3-3 3 3" fill="none" stroke="#666" stroke-width="1"/></svg>
<div class="r" style="left:54px;top:96px;width:1px;height:427px;background:#d6d6d6;"></div>
<div class="r" style="left:43px;top:97px;width:9px;height:425px;background:#dadada;"></div>
<div class="r" style="left:43px;top:97px;width:9px;height:9px;background:#fff;"></div>
<div class="r" style="left:43px;top:107px;width:9px;height:314px;background:#fff;"></div>
<div class="r" style="left:43px;top:513px;width:9px;height:9px;background:#fff;"></div>
<div class="t" style="left:7.70px;top:103.16px;font-family:'Liberation Sans',sans-serif;font-size:9.800px;line-height:1.6;color:#555555;transform:scaleX(0.9193);transform-origin:0 0;">1</div>
<div class="t" style="left:7.70px;top:122.96px;font-family:'Liberation Sans',sans-serif;font-size:9.800px;line-height:1.6;color:#555555;transform:scaleX(0.9193);transform-origin:0 0;">2</div>
<div class="t" style="left:7.70px;top:142.76px;font-family:'Liberation Sans',sans-serif;font-size:9.800px;line-height:1.6;color:#555555;transform:scaleX(0.9193);transform-origin:0 0;">3</div>
<div class="t" style="left:7.70px;top:162.56px;font-family:'Liberation Sans',sans-serif;font-size:9.800px;line-height:1.6;color:#555555;transform:scaleX(0.9193);transform-origin:0 0;">4</div>
<div class="t" style="left:7.70px;top:182.36px;font-family:'Liberation Sans',sans-serif;font-size:9.800px;line-height:1.6;color:#555555;transform:scaleX(0.9193);transform-origin:0 0;">5</div>
<div class="t" style="left:7.70px;top:202.16px;font-family:'Liberation Sans',sans-serif;font-size:9.800px;line-height:1.6;color:#d9603f;transform:scaleX(0.9193);transform-origin:0 0;">6</div>
<div class="t" style="left:7.70px;top:221.96px;font-family:'Liberation Sans',sans-serif;font-size:9.800px;line-height:1.6;color:#555555;transform:scaleX(0.9193);transform-origin:0 0;">7</div>
<div class="t" style="left:7.70px;top:241.76px;font-family:'Liberation Sans',sans-serif;font-size:9.800px;line-height:1.6;color:#555555;transform:scaleX(0.9193);transform-origin:0 0;">8</div>
<div class="t" style="left:7.70px;top:261.56px;font-family:'Liberation Sans',sans-serif;font-size:9.800px;line-height:1.6;color:#555555;transform:scaleX(0.9193);transform-origin:0 0;">9</div>
<div class="t" style="left:3.00px;top:281.36px;font-family:'Liberation Sans',sans-serif;font-size:9.800px;line-height:1.6;color:#555555;transform:scaleX(0.8897);transform-origin:0 0;">10</div>
<div class="t" style="left:3.00px;top:301.16px;font-family:'Liberation Sans',sans-serif;font-size:9.800px;line-height:1.6;color:#555555;transform:scaleX(0.9540);transform-origin:0 0;">11</div>
<div class="t" style="left:3.00px;top:320.96px;font-family:'Liberation Sans',sans-serif;font-size:9.800px;line-height:1.6;color:#555555;transform:scaleX(0.8897);transform-origin:0 0;">12</div>
<div class="t" style="left:3.00px;top:340.76px;font-family:'Liberation Sans',sans-serif;font-size:9.800px;line-height:1.6;color:#555555;transform:scaleX(0.8897);transform-origin:0 0;">13</div>
<div class="t" style="left:3.00px;top:360.56px;font-family:'Liberation Sans',sans-serif;font-size:9.800px;line-height:1.6;color:#555555;transform:scaleX(0.8897);transform-origin:0 0;">14</div>
<div class="t" style="left:3.00px;top:380.36px;font-family:'Liberation Sans',sans-serif;font-size:9.800px;line-height:1.6;color:#555555;transform:scaleX(0.8897);transform-origin:0 0;">15</div>
<div class="t" style="left:3.00px;top:400.16px;font-family:'Liberation Sans',sans-serif;font-size:9.800px;line-height:1.6;color:#555555;transform:scaleX(0.8897);transform-origin:0 0;">16</div>
<div class="t" style="left:3.00px;top:419.96px;font-family:'Liberation Sans',sans-serif;font-size:9.800px;line-height:1.6;color:#555555;transform:scaleX(0.8897);transform-origin:0 0;">17</div>
<div class="t" style="left:3.00px;top:439.76px;font-family:'Liberation Sans',sans-serif;font-size:9.800px;line-height:1.6;color:#555555;transform:scaleX(0.8897);transform-origin:0 0;">18</div>
<div class="t" style="left:3.00px;top:459.56px;font-family:'Liberation Sans',sans-serif;font-size:9.800px;line-height:1.6;color:#555555;transform:scaleX(0.8897);transform-origin:0 0;">19</div>
<div class="t" style="left:3.00px;top:479.36px;font-family:'Liberation Sans',sans-serif;font-size:9.800px;line-height:1.6;color:#555555;transform:scaleX(0.8897);transform-origin:0 0;">20</div>
<div class="t" style="left:3.00px;top:499.16px;font-family:'Liberation Sans',sans-serif;font-size:9.800px;line-height:1.6;color:#555555;transform:scaleX(0.8897);transform-origin:0 0;">21</div>
<div class="r" style="left:178px;top:103px;width:688px;height:387px;background:#fff;box-shadow:0 0 0 1px #dedede"></div>
<div class="r" style="left:191px;top:116px;width:662px;height:360px;background:#f6f6f6;"></div>
<div class="r" style="left:199px;top:124px;width:647px;height:345px;background:transparent;border:1px solid #747474;box-shadow:1px 1px 0 rgba(0,0,0,0.15)"></div>
<svg class="r" style="left:208px;top:234px;" width="6" height="6" viewBox="0 0 6 6"><circle cx="3" cy="3" r="1.7" fill="none" stroke="#333" stroke-width="0.8"/></svg>
<div class="t" style="left:220.00px;top:228.39px;font-family:'Liberation Serif',serif;font-size:12.400px;line-height:1.6;color:#2c2c2c;transform:scaleX(1.0101);transform-origin:0 0;">В проекте жилой среды важны внятные, конкретно сформулированные задачи, представленные, обобщенно</div>
<div class="t" style="left:220.00px;top:243.79px;font-family:'Liberation Serif',serif;font-size:12.400px;line-height:1.6;color:#2c2c2c;transform:scaleX(1.0127);transform-origin:0 0;">говоря, двумя сферами: духовной и физической. К первой сфере относятся задачи создания художественно</div>
<div class="t" style="left:220.00px;top:259.29px;font-family:'Liberation Serif',serif;font-size:12.400px;line-height:1.6;color:#2c2c2c;transform:scaleX(1.0219);transform-origin:0 0;">полноценной, гармоничной и психологически комфортной обстановки. Решение этих задач начинается с</div>
<div class="t" style="left:220.00px;top:274.69px;font-family:'Liberation Serif',serif;font-size:12.400px;line-height:1.6;color:#2c2c2c;transform:scaleX(1.0090);transform-origin:0 0;">разработки общего стилистического образа пространства. Вторая сфера — создание и запуск в действие</div>
<div class="t" style="left:220.00px;top:290.19px;font-family:'Liberation Serif',serif;font-size:12.400px;line-height:1.6;color:#2c2c2c;">механизма жизнеобеспечения (теплоснабжение, вентиляция, электроснабжение, освещенность и так далее), а</div>
<div class="t" style="left:220.00px;top:305.50px;font-family:'Liberation Serif',serif;font-size:12.400px;line-height:1.6;color:#2c2c2c;">также техническое обеспечение идей проектировщика (конструкции, материалы, краски).</div>
<div class="r" style="left:990px;top:97px;width:9px;height:366px;background:#dadada;"></div>
<div class="r" style="left:990px;top:97px;width:9px;height:9px;background:#fff;"></div>
<div class="r" style="left:990px;top:170px;width:9px;height:13px;background:#fff;"></div>
<div class="r" style="left:990px;top:454px;width:9px;height:9px;background:#fff;"></div>
<div class="r" style="left:55px;top:499px;width:945px;height:1px;background:#d2d2d2;"></div>
<div class="t" style="left:61.60px;top:502.54px;font-family:'Liberation Sans',sans-serif;font-size:9.383px;line-height:1.6;color:#555;">Заметки к слайду</div>
<div class="r" style="left:0px;top:524px;width:1000px;height:13px;background:#f1f1f1;"></div>
<div class="t" style="left:4.00px;top:525.23px;font-family:'Liberation Sans',sans-serif;font-size:6.600px;line-height:1.6;color:#555;transform:scaleX(0.9849);transform-origin:0 0;">Слайд 6 из 27</div>
<div class="t" style="left:74.90px;top:525.23px;font-family:'Liberation Sans',sans-serif;font-size:6.600px;line-height:1.6;color:#555;transform:scaleX(1.0263);transform-origin:0 0;">русский</div>
<div class="t" style="left:695.20px;top:525.23px;font-family:'Liberation Sans',sans-serif;font-size:6.600px;line-height:1.6;color:#555;transform:scaleX(0.9903);transform-origin:0 0;">Заметки</div>
<div class="t" style="left:741.80px;top:525.23px;font-family:'Liberation Sans',sans-serif;font-size:6.600px;line-height:1.6;color:#555;transform:scaleX(1.0158);transform-origin:0 0;">Примечания</div>
<div class="r" style="left:791px;top:524px;width:21px;height:13px;background:#cdcdcd;"></div>
<div class="t" style="left:966.90px;top:525.23px;font-family:'Liberation Sans',sans-serif;font-size:6.600px;line-height:1.6;color:#666;transform:scaleX(0.9685);transform-origin:0 0;">83%</div>
<div class="r" style="left:0px;top:537px;width:1000px;height:26px;background:#1c1c1c;"></div>
<div class="r" style="left:292px;top:537px;width:32px;height:26px;background:#3b3b3b;"></div>
<div class="t" style="left:933.50px;top:544.66px;font-family:'Liberation Sans',sans-serif;font-size:7.800px;line-height:1.6;color:#fff;transform:scaleX(0.8515);transform-origin:0 0;">РУС</div>
<div class="t" style="left:965.30px;top:538.86px;font-family:'Liberation Sans',sans-serif;font-size:7.800px;line-height:1.6;color:#fff;transform:scaleX(0.9170);transform-origin:0 0;">13:03</div>
<div class="t" style="left:956.60px;top:550.86px;font-family:'Liberation Sans',sans-serif;font-size:7.800px;line-height:1.6;color:#fff;transform:scaleX(0.9170);transform-origin:0 0;">13.10.2021</div>
<div class="r" style="left:17px;top:107px;width:13px;height:8px;background:#fff;border:1px solid #d2d2d2"></div>
<svg class="r" style="left:18px;top:108px;" width="11" height="6" viewBox="0 0 11 6"><rect x="0.5" y="0.5" width="10" height="5.2" fill="none" stroke="#e0e0e0" stroke-width="0.6"/><g opacity="0.65"><rect x="3" y="1.5" width="6" height="4" fill="#fff"/><rect x="5.5" y="1" width="1.5" height="1" fill="#555"/><rect x="1.5" y="1.5" width="0.8" height="4.5" fill="#bbb"/></g></svg>
<div class="r" style="left:17px;top:127px;width:13px;height:8px;background:#fff;border:1px solid #d2d2d2"></div>
<svg class="r" style="left:18px;top:128px;" width="11" height="6" viewBox="0 0 11 6"><rect x="0.5" y="0.5" width="10" height="5.2" fill="none" stroke="#e0e0e0" stroke-width="0.6"/><g opacity="0.65"><rect x="1.5" y="3" width="3" height="1" fill="#7ab"/><rect x="5" y="3" width="5" height="1" fill="#777"/></g></svg>
<div class="r" style="left:17px;top:147px;width:13px;height:8px;background:#fff;border:1px solid #d2d2d2"></div>
<svg class="r" style="left:18px;top:148px;" width="11" height="6" viewBox="0 0 11 6"><rect x="0.5" y="0.5" width="10" height="5.2" fill="none" stroke="#e0e0e0" stroke-width="0.6"/><g opacity="0.65"><rect x="2" y="2" width="3" height="3" fill="#9a7b5a"/><rect x="6.5" y="2" width="3" height="3" fill="#7a6048"/></g></svg>
<div class="r" style="left:17px;top:167px;width:13px;height:8px;background:#fff;border:1px solid #d2d2d2"></div>
<svg class="r" style="left:18px;top:168px;" width="11" height="6" viewBox="0 0 11 6"><rect x="0.5" y="0.5" width="10" height="5.2" fill="none" stroke="#e0e0e0" stroke-width="0.6"/><g opacity="0.65"><rect x="1.5" y="2" width="5" height="0.8" fill="#aaa"/><rect x="1.5" y="4" width="7" height="0.8" fill="#ccc"/></g></svg>
<div class="r" style="left:17px;top:186px;width:13px;height:8px;background:#fff;border:1px solid #d2d2d2"></div>
<svg class="r" style="left:18px;top:187px;" width="11" height="6" viewBox="0 0 11 6"><rect x="0.5" y="0.5" width="10" height="5.2" fill="none" stroke="#e0e0e0" stroke-width="0.6"/><g opacity="0.65"><rect x="1" y="2" width="4.5" height="3" fill="#444"/><rect x="6" y="2" width="4" height="3" fill="#b59c7c"/></g></svg>
<div class="r" style="left:16px;top:204px;width:15px;height:11px;background:#fff;border:2px solid #e9704e"></div>
<svg class="r" style="left:18px;top:206px;" width="11" height="7" viewBox="0 0 11 7"><g opacity="0.6"><rect x="4" y="2.5" width="3" height="0.8" fill="#e9a070"/><rect x="1" y="5.5" width="10" height="1" fill="#c8c8c8"/></g></svg>
<div class="r" style="left:17px;top:226px;width:13px;height:8px;background:#fff;border:1px solid #d2d2d2"></div>
<svg class="r" style="left:18px;top:227px;" width="11" height="6" viewBox="0 0 11 6"><rect x="0.5" y="0.5" width="10" height="5.2" fill="none" stroke="#e0e0e0" stroke-width="0.6"/><g opacity="0.65"><rect x="2" y="2" width="1.5" height="1" fill="#666"/><rect x="5" y="3" width="1" height="2" fill="#777"/><rect x="8" y="3" width="1" height="2" fill="#777"/></g></svg>
<div class="r" style="left:17px;top:246px;width:13px;height:8px;background:#fff;border:1px solid #d2d2d2"></div>
<svg class="r" style="left:18px;top:247px;" width="11" height="6" viewBox="0 0 11 6"><rect x="0.5" y="0.5" width="10" height="5.2" fill="none" stroke="#e0e0e0" stroke-width="0.6"/><g opacity="0.65"><rect x="1.5" y="3" width="7" height="1.2" fill="#666"/></g></svg>
<div class="r" style="left:17px;top:266px;width:13px;height:8px;background:#fff;border:1px solid #d2d2d2"></div>
<svg class="r" style="left:18px;top:267px;" width="11" height="6" viewBox="0 0 11 6"><rect x="0.5" y="0.5" width="10" height="5.2" fill="none" stroke="#e0e0e0" stroke-width="0.6"/><g opacity="0.65"><rect x="2" y="3" width="6" height="0.8" fill="#bbb"/></g></svg>
<div class="r" style="left:17px;top:286px;width:13px;height:8px;background:#fff;border:1px solid #d2d2d2"></div>
<svg class="r" style="left:18px;top:287px;" width="11" height="6" viewBox="0 0 11 6"><rect x="0.5" y="0.5" width="10" height="5.2" fill="none" stroke="#e0e0e0" stroke-width="0.6"/><g opacity="0.65"><rect x="1" y="1.5" width="4.5" height="4" fill="#2b3f66"/><rect x="6" y="1.5" width="4.5" height="4" fill="#5a4330"/></g></svg>
<div class="r" style="left:17px;top:305px;width:13px;height:8px;background:#fff;border:1px solid #d2d2d2"></div>
<svg class="r" style="left:18px;top:306px;" width="11" height="6" viewBox="0 0 11 6"><rect x="0.5" y="0.5" width="10" height="5.2" fill="none" stroke="#e0e0e0" stroke-width="0.6"/><g opacity="0.65"><rect x="1" y="1.5" width="4.5" height="4" fill="#5a4a2a"/><rect x="6" y="1.5" width="4.5" height="4" fill="#6f8a3a"/></g></svg>
<div class="r" style="left:17px;top:325px;width:13px;height:8px;background:#fff;border:1px solid #d2d2d2"></div>
<svg class="r" style="left:18px;top:326px;" width="11" height="6" viewBox="0 0 11 6"><rect x="0.5" y="0.5" width="10" height="5.2" fill="none" stroke="#e0e0e0" stroke-width="0.6"/><g opacity="0.65"><rect x="1.5" y="3" width="8" height="0.8" fill="#999"/><rect x="2" y="3" width="2" height="0.8" fill="#c77"/></g></svg>
<div class="r" style="left:17px;top:345px;width:13px;height:8px;background:#fff;border:1px solid #d2d2d2"></div>
<svg class="r" style="left:18px;top:346px;" width="11" height="6" viewBox="0 0 11 6"><rect x="0.5" y="0.5" width="10" height="5.2" fill="none" stroke="#e0e0e0" stroke-width="0.6"/><g opacity="0.65"><rect x="1" y="1" width="10" height="5" fill="#f0f0f0"/></g></svg>
<div class="r" style="left:17px;top:365px;width:13px;height:8px;background:#fff;border:1px solid #d2d2d2"></div>
<svg class="r" style="left:18px;top:366px;" width="11" height="6" viewBox="0 0 11 6"><rect x="0.5" y="0.5" width="10" height="5.2" fill="none" stroke="#e0e0e0" stroke-width="0.6"/><g opacity="0.65"><rect x="1.5" y="2.5" width="3" height="2" fill="#8aa0c8"/><rect x="5" y="3" width="5" height="1" fill="#888"/></g></svg>
<div class="r" style="left:17px;top:384px;width:13px;height:8px;background:#fff;border:1px solid #d2d2d2"></div>
<svg class="r" style="left:18px;top:385px;" width="11" height="6" viewBox="0 0 11 6"><rect x="0.5" y="0.5" width="10" height="5.2" fill="none" stroke="#e0e0e0" stroke-width="0.6"/><g opacity="0.65"><rect x="1" y="2.5" width="9.5" height="2" fill="#5c4a3a"/></g></svg>
<div class="r" style="left:17px;top:404px;width:13px;height:8px;background:#fff;border:1px solid #d2d2d2"></div>
<svg class="r" style="left:18px;top:405px;" width="11" height="6" viewBox="0 0 11 6"><rect x="0.5" y="0.5" width="10" height="5.2" fill="none" stroke="#e0e0e0" stroke-width="0.6"/><g opacity="0.65"><rect x="2" y="3" width="6" height="0.8" fill="#ccc"/></g></svg>
<div class="r" style="left:17px;top:424px;width:13px;height:8px;background:#fff;border:1px solid #d2d2d2"></div>
<svg class="r" style="left:18px;top:425px;" width="11" height="6" viewBox="0 0 11 6"><rect x="0.5" y="0.5" width="10" height="5.2" fill="none" stroke="#e0e0e0" stroke-width="0.6"/><g opacity="0.65"><rect x="1" y="1.5" width="9" height="4" fill="#5a4a34"/><rect x="5" y="2" width="4" height="2.5" fill="#8a7a50"/></g></svg>
<div class="r" style="left:17px;top:444px;width:13px;height:8px;background:#fff;border:1px solid #d2d2d2"></div>
<svg class="r" style="left:18px;top:445px;" width="11" height="6" viewBox="0 0 11 6"><rect x="0.5" y="0.5" width="10" height="5.2" fill="none" stroke="#e0e0e0" stroke-width="0.6"/><g opacity="0.65"><rect x="1.5" y="2" width="3" height="2.5" fill="#555"/><rect x="6" y="2" width="4" height="2.5" fill="#6b7a5a"/></g></svg>
<div class="r" style="left:17px;top:464px;width:13px;height:8px;background:#fff;border:1px solid #d2d2d2"></div>
<svg class="r" style="left:18px;top:465px;" width="11" height="6" viewBox="0 0 11 6"><rect x="0.5" y="0.5" width="10" height="5.2" fill="none" stroke="#e0e0e0" stroke-width="0.6"/><g opacity="0.65"><rect x="2" y="1.5" width="5" height="0.8" fill="#ccc"/></g></svg>
<div class="r" style="left:17px;top:484px;width:13px;height:8px;background:#fff;border:1px solid #d2d2d2"></div>
<svg class="r" style="left:18px;top:485px;" width="11" height="6" viewBox="0 0 11 6"><rect x="0.5" y="0.5" width="10" height="5.2" fill="none" stroke="#e0e0e0" stroke-width="0.6"/><g opacity="0.65"><rect x="1.5" y="2" width="2" height="2" fill="#9a8a70"/><rect x="4.5" y="2.5" width="5.5" height="1.5" fill="#888"/></g></svg>
<div class="r" style="left:17px;top:503px;width:13px;height:8px;background:#fff;border:1px solid #d2d2d2"></div>
<svg class="r" style="left:18px;top:504px;" width="11" height="6" viewBox="0 0 11 6"><rect x="0.5" y="0.5" width="10" height="5.2" fill="none" stroke="#e0e0e0" stroke-width="0.6"/><g opacity="0.65"><rect x="1" y="1.5" width="9.5" height="4" fill="#7a6448"/><rect x="2" y="2" width="3" height="2" fill="#c8b8a0"/></g></svg>
<svg class="r" style="left:42.5px;top:97px;" width="10" height="9" viewBox="0 0 10 9"><path d="M2.5 6l2.5-2.5 2.5 2.5z" fill="#555"/></svg>
<svg class="r" style="left:42.5px;top:513px;" width="10" height="9" viewBox="0 0 10 9"><path d="M2.5 3l2.5 2.5 2.5-2.5z" fill="#555"/></svg>
<svg class="r" style="left:989.5px;top:97px;" width="10" height="9" viewBox="0 0 10 9"><path d="M2.5 6l2.5-2.5 2.5 2.5z" fill="#555"/></svg>
<svg class="r" style="left:989.5px;top:454px;" width="10" height="9" viewBox="0 0 10 9"><path d="M2.5 3l2.5 2.5 2.5-2.5z" fill="#555"/></svg>
<svg class="r" style="left:991px;top:466px;" width="8" height="6" viewBox="0 0 8 6"><path d="M1 0.8h6" stroke="#666" stroke-width="0.8"/><path d="M1.2 4.5l2.8-2.5 2.8 2.5z" fill="#666"/></svg>
<svg class="r" style="left:991px;top:477px;" width="8" height="6" viewBox="0 0 8 6"><path d="M1 5.2h6" stroke="#666" stroke-width="0.8"/><path d="M1.2 1.5l2.8 2.5 2.8-2.5z" fill="#666"/></svg>
<svg class="r" style="left:56px;top:525px;" width="11" height="10" viewBox="0 0 11 10"><path d="M0.8 1h3.5l1.2 1v7l-1.2-1h-3.5z" fill="none" stroke="#777" stroke-width="0.8"/><path d="M5.5 2l1.2-1h3.5v7h-3.5l-1.2 1z" fill="none" stroke="#777" stroke-width="0.8"/><path d="M7.2 4.2h2M7.2 6h2" stroke="#777" stroke-width="0.7"/></svg>
<svg class="r" style="left:684px;top:524px;" width="10" height="10" viewBox="0 0 10 10"><path d="M3 3l1.8-1.8 1.8 1.8z" fill="#666"/><path d="M1 4.8h8M1 6.4h8M2 8.2h5" fill="none" stroke="#a0a0a0" stroke-width="0.9"/></svg>
<svg class="r" style="left:730px;top:525px;" width="10" height="10" viewBox="0 0 10 10"><path d="M0.8 0.8h8.4v5.5h-4.2l-2.2 2.2v-2.2h-2z" fill="#6f6f6f"/></svg>
<svg class="r" style="left:797px;top:525px;" width="10" height="10" viewBox="0 0 10 10"><rect x="1" y="1" width="7.2" height="7.2" fill="none" stroke="#6a6a6a" stroke-width="0.9"/><path d="M2.6 1v5.2h5.6" fill="none" stroke="#6a6a6a" stroke-width="0.9"/><path d="M3.8 2.8h3.2M3.8 4.3h3.2" stroke="#8a8a8a" stroke-width="0.7"/></svg>
<svg class="r" style="left:818px;top:525px;" width="11" height="10" viewBox="0 0 11 10"><rect x="1.2" y="1.3" width="3.6" height="2.4" fill="none" stroke="#7a7a7a" stroke-width="0.8"/><rect x="6" y="1.3" width="3.6" height="2.4" fill="none" stroke="#7a7a7a" stroke-width="0.8"/><rect x="1.2" y="5.5" width="3.6" height="2.4" fill="none" stroke="#7a7a7a" stroke-width="0.8"/><rect x="6" y="5.5" width="3.6" height="2.4" fill="none" stroke="#7a7a7a" stroke-width="0.8"/></svg>
<svg class="r" style="left:839px;top:525px;" width="10" height="10" viewBox="0 0 10 10"><path d="M1 1.5h3.6l0.4 0.4 0.4-0.4h3.6v6.8h-3.6l-0.4 0.4-0.4-0.4h-3.6z" fill="#bdbdbd" stroke="#9a9a9a" stroke-width="0.7"/><path d="M5 1.9v6.8" stroke="#8a8a8a" stroke-width="0.6"/></svg>
<svg class="r" style="left:861px;top:525px;" width="10" height="10" viewBox="0 0 10 10"><rect x="0.8" y="0.8" width="7.6" height="1.1" fill="#808080"/><rect x="1.5" y="1.9" width="6.2" height="3.6" fill="#c8c8c8" stroke="#808080" stroke-width="0.7"/><path d="M4.6 5.5v2.8M3 8.6h3.2" stroke="#808080" stroke-width="0.8"/></svg>
<div class="r" style="left:879px;top:529px;width:5px;height:1px;background:#555;"></div>
<div class="r" style="left:886px;top:529px;width:65px;height:1px;background:#c4c4c4;"></div>
<div class="r" style="left:911px;top:526px;width:3px;height:7px;background:#6a6a6a;"></div>
<div class="r" style="left:918px;top:527px;width:1px;height:4px;background:#b0b0b0;"></div>
<div class="r" style="left:953px;top:529px;width:6px;height:1px;background:#555;"></div>
<div class="r" style="left:955.5px;top:526px;width:1px;height:7px;background:#555;"></div>
<svg class="r" style="left:988px;top:526px;" width="9" height="9" viewBox="0 0 9 9"><rect x="0.5" y="0.5" width="8" height="8" fill="none" stroke="#9a9a9a" stroke-width="0.8"/><path d="M1.5 3.2h1.7v-1.7M7.5 3.2h-1.7v-1.7M1.5 5.8h1.7v1.7M7.5 5.8h-1.7v1.7" fill="none" stroke="#777" stroke-width="0.8"/></svg>
<svg class="r" style="left:9px;top:544px;" width="13" height="12" viewBox="0 0 13 12"><path d="M0.8 1.6l4.6-0.7v4.5h-4.6zM6.2 0.8l5.8-0.8v5.4h-5.8zM0.8 6.3h4.6v4.5l-4.6-0.7zM6.2 6.3h5.8v5.4l-5.8-0.8z" fill="#fff"/></svg>
<svg class="r" style="left:41px;top:543px;" width="16" height="14" viewBox="0 0 16 14"><path d="M0.5 1.5h5l1.5 1.5h8.5v10.5h-15z" fill="#f8cb5c"/><path d="M0.5 3.6h15v1.3h-15z" fill="#e6b34a"/><rect x="3.3" y="8.2" width="9.5" height="2.2" fill="#3a96dd"/><rect x="3.3" y="10.4" width="2.2" height="3.2" fill="#3a96dd"/><rect x="10.6" y="10.4" width="2.2" height="3.2" fill="#3a96dd"/></svg>
<svg class="r" style="left:73px;top:542px;" width="16" height="15" viewBox="0 0 16 15"><circle cx="8.2" cy="7" r="6.6" fill="#fff"/><circle cx="8.2" cy="7" r="5.6" fill="#25d366"/><path d="M1.3 14.3l1.2-3.8 2.4 2.6z" fill="#fff"/><path d="M5.6 4.6c0.5-0.8 1.1-0.6 1.4 0l0.6 1.2c0.1 0.4-0.4 0.8-0.6 1.1 0.6 1.2 1.5 2 2.6 2.5 0.3-0.2 0.7-0.8 1.1-0.6l1.2 0.6c0.4 0.3 0.4 0.9-0.1 1.4-0.8 0.7-1.9 0.7-3.4-0.1-1.5-0.9-2.6-2.1-3.1-3.6-0.2-0.9-0.1-1.9 0.3-2.5z" fill="#fff"/></svg>
<svg class="r" style="left:106px;top:543px;" width="15" height="15" viewBox="0 0 15 15"><defs><linearGradient id="cg" x1="0" y1="1" x2="1" y2="0"><stop offset="0" stop-color="#7d2ae8"/><stop offset="0.55" stop-color="#3b6fe0"/><stop offset="1" stop-color="#00c4cc"/></linearGradient></defs><circle cx="7.5" cy="7.2" r="7" fill="url(#cg)"/><path d="M10 4.2c-0.6-1-2.6-1.2-4 0.5-1.5 1.8-1.4 4.6 0.6 4.8 1.3 0.1 2.5-0.8 3.2-1.6" fill="none" stroke="#fff" stroke-width="1.2"/></svg>
<svg class="r" style="left:138px;top:542px;" width="16" height="16" viewBox="0 0 16 16"><rect x="0" y="0" width="16" height="16" fill="#f3e6e2"/><path d="M2.5 14l4.2-12h2.6l4.2 12h-2.5l-1-3h-4l-1 3zM6.8 9h2.4l-1.2-3.8z" fill="#c11c23"/></svg>
<svg class="r" style="left:170px;top:542px;" width="16" height="16" viewBox="0 0 16 16"><rect x="0" y="0" width="16" height="16" fill="#8fd8d4"/><path d="M0 0h16v16h-16z" fill="#bfe9e6" opacity="0.6"/><text x="3.2" y="12.5" font-family="Liberation Sans" font-weight="bold" font-size="12" fill="#1e8a8a">3</text><rect x="9" y="12.5" width="5" height="1.6" fill="#3aa"/></svg>
<svg class="r" style="left:203px;top:542px;" width="15" height="15" viewBox="0 0 15 15"><rect x="0" y="0" width="15" height="15" rx="2" fill="#001e36"/><text x="1.8" y="10.4" font-family="Liberation Sans" font-weight="bold" font-size="7.6" fill="#31a8ff">Ps</text></svg>
<svg class="r" style="left:235px;top:542px;" width="15" height="15" viewBox="0 0 15 15"><rect x="0" y="0" width="15" height="15" rx="2" fill="#330000"/><rect x="0.6" y="0.6" width="13.8" height="13.8" rx="1.6" fill="none" stroke="#ff9a00" stroke-width="1.1"/><text x="2.6" y="10.4" font-family="Liberation Sans" font-weight="bold" font-size="7.6" fill="#ff9a00">Ai</text></svg>
<svg class="r" style="left:267px;top:542px;" width="16" height="16" viewBox="0 0 16 16"><circle cx="7.8" cy="7.8" r="7.5" fill="#fff"/><path d="M4.5 3l3.3 5.5 3.3-5.5M7.8 8.5v5" fill="none" stroke="#fc3f1d" stroke-width="2"/></svg>
<div class="r" style="left:262px;top:561px;width:26px;height:2px;background:#76b9ed;"></div>
<div class="r" style="left:292px;top:561px;width:32px;height:2px;background:#76b9ed;"></div>
<svg class="r" style="left:300px;top:542px;" width="15" height="15" viewBox="0 0 15 15"><rect x="6" y="1.5" width="8.5" height="12" fill="#fff"/><path d="M8 4h5M8 6.5h5M8 9h5M8 11.5h4" stroke="#d35230" stroke-width="1"/><path d="M0 2l9-1.8v15.6l-9-1.8z" fill="#c43e1c"/><path d="M2.5 11v-6.8h2.2c1.4 0 2.1 0.7 2.1 2s-0.8 2.1-2.1 2.1h-0.9v2.7zM3.8 7.2h0.8c0.6 0 0.9-0.3 0.9-0.9s-0.3-0.9-0.9-0.9h-0.8z" fill="#fff"/></svg>
<svg class="r" style="left:869px;top:546px;" width="10" height="7" viewBox="0 0 10 7"><path d="M0.8 5.8l4-4.2 4 4.2" fill="none" stroke="#fff" stroke-width="0.9"/></svg>
<svg class="r" style="left:884px;top:546px;" width="12" height="8" viewBox="0 0 12 8"><rect x="2.5" y="1.8" width="8.5" height="5" fill="#fff"/><rect x="11" y="3.3" width="1" height="2" fill="#fff"/><circle cx="1.5" cy="1.5" r="1.2" fill="none" stroke="#fff" stroke-width="0.7"/><path d="M1.5 2.7v4" stroke="#fff" stroke-width="0.7"/></svg>
<svg class="r" style="left:900px;top:545px;" width="11" height="9" viewBox="0 0 11 9"><path d="M1 8.3a7.5 7.5 0 0 1 7.3-7.3M2.8 8.3a5.6 5.6 0 0 1 5.5-5.5M4.6 8.3a3.8 3.8 0 0 1 3.7-3.7" fill="none" stroke="#fff" stroke-width="0.8"/><circle cx="8.3" cy="8" r="1" fill="#fff"/></svg>
<svg class="r" style="left:914px;top:545px;" width="12" height="9" viewBox="0 0 12 9"><path d="M0.8 3h2l3-2.5v8l-3-2.5h-2z" fill="none" stroke="#fff" stroke-width="0.8"/><path d="M7.5 3c0.6 0.8 0.6 2.2 0 3M9.3 1.8c1.2 1.4 1.2 4 0 5.4" fill="none" stroke="#fff" stroke-width="0.7"/></svg>
<div class="r" style="left:996px;top:537px;width:1px;height:26px;background:#5a5a5a;"></div>
</body></html>
